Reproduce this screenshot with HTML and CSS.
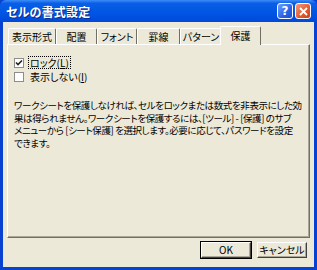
FILE: index.html
```html
<!DOCTYPE html>
<html>
	<head>
		<meta charset="utf-8">
		<title>セルの書式設定</title>
		<link rel="stylesheet" href="styles.css">
	</head>
	<body>
		<div class="window">
			<div class="titlebar">
				<span class="title">セルの書式設定</span>
				<span class="tbtn help">?</span>
				<span class="tbtn close">
					<svg width="9" height="9" viewBox="0 0 9 9"><path d="M1 1L8 8M8 1L1 8" stroke="#fff" stroke-width="1.8"/></svg>
				</span>
			</div>
			<div class="frame">
				<div class="tabs">
					<span class="tab" style="width:48px">表示形式</span>
					<span class="tab" style="width:41px">配置</span>
					<span class="tab" style="width:40px">フォント</span>
					<span class="tab" style="width:43px">罫線</span>
					<span class="tab" style="width:42px">パターン</span>
					<span class="tab active" style="width:41px">保護</span>
				</div>
				<div class="panel">
					<div class="check">
						<span class="box">
							<svg width="8" height="8" viewBox="0 0 8 8"><path d="M1 3.5L3 5.5L7 1.5" fill="none" stroke="#222" stroke-width="1.6"/></svg>
						</span>
						<span class="label focus">ロック(<u>L</u>)</span>
					</div>
					<div class="check">
						<span class="box"></span>
						<span class="label">表示しない(<u>I</u>)</span>
					</div>
					<p class="note">ワークシートを保護しなければ、セルをロックまたは数式を非表示にした効<br>果は得られません。ワークシートを保護するには、[ツール] - [保護] のサブ<br>メニューから [シート保護] を選択します。必要に応じて、パスワードを設定<br>できます。</p>
				</div>
				<div class="footer">
					<button class="btn default">OK</button>
					<button class="btn">キャンセル</button>
				</div>
			</div>
		</div>
	</body>
</html>
```

FILE: styles.css
```css
*{
	margin: 0;
	padding: 0;
	box-sizing: border-box;
}
body{
	width: 317px;
	height: 270px;
	font-family: "Noto Sans CJK JP", sans-serif;
	font-size: 10px;
	font-feature-settings: "palt";
	color: #000;
}
.window{
	width: 317px;
	height: 270px;
	background: #0842d0;
	display: flex;
	flex-direction: column;
}
.titlebar{
	height: 22px;
	display: flex;
	align-items: center;
	padding: 0 6px 0 6px;
	background: linear-gradient(#3d8cf8 0%, #0a5ee6 15%, #0055e5 60%, #0049d8 100%);
	border-radius: 6px 6px 0 0;
}
.title{
	flex: 1;
	color: #fff;
	font-weight: bold;
	font-size: 12px;
	letter-spacing: 0.2px;
	text-shadow: 1px 1px 0 #0a2a8a;
}
.tbtn{
	width: 16px;
	height: 16px;
	border: 1px solid #fff;
	border-radius: 3px;
	display: flex;
	align-items: center;
	justify-content: center;
	color: #fff;
	font-family: "DejaVu Sans", sans-serif;
	font-weight: bold;
	font-size: 12px;
	margin-left: 2px;
}
.help{
	background: linear-gradient(135deg, #6fa2ff, #2a63e8 60%, #1d4fd0);
}
.close{
	background: linear-gradient(135deg, #f39a7c, #e25a2e 60%, #c8401c);
}
.frame{
	flex: 1;
	margin: 0 3px 3px;
	background: #ece9d8;
	display: flex;
	flex-direction: column;
	padding: 4px 4px 0 4px;
}
.tabs{
	display: flex;
	align-items: flex-end;
	height: 18px;
	padding-left: 1px;
	position: relative;
	z-index: 1;
}
.tab{
	height: 16px;
	display: flex;
	align-items: center;
	justify-content: center;
	border-left: 1px solid #fff;
	border-top: 1px solid #fff;
	border-right: 1px solid #716f64;
	border-radius: 2px 2px 0 0;
	white-space: nowrap;
}
.tab.active{
	height: 19px;
	margin: 0 -2px -1px;
	background: #ece9d8;
	padding-bottom: 1px;
}
.panel{
	height: 194px;
	border-left: 1px solid #fff;
	border-top: 1px solid #fff;
	border-right: 1px solid #716f64;
	border-bottom: 1px solid #716f64;
	padding: 11px 0 0 6px;
	box-shadow: inset -1px -1px 0 #aca899;
	overflow: hidden;
}
.check{
	display: flex;
	align-items: center;
	height: 13px;
	margin-bottom: 1px;
}
.box{
	width: 10px;
	height: 10px;
	border: 1px solid #8d8d8d;
	background: #fff;
	display: flex;
	align-items: center;
	justify-content: center;
	margin-right: 4px;
}
.label{
	padding: 0 1px;
	line-height: 11px;
	border: 1px dotted transparent;
}
.label.focus{
	border-color: #000;
}
.note{
	margin-top: 16px;
	line-height: 12.5px;
	font-size: 9.5px;
	letter-spacing: -0.4px;
	white-space: nowrap;
}
.footer{
	display: flex;
	justify-content: flex-end;
	padding: 4px 3px 0 0;
}
.btn{
	width: 50px;
	height: 16px;
	margin-left: 6px;
	font-family: "Noto Sans CJK JP", sans-serif;
	font-size: 10px;
	font-feature-settings: "palt";
	background: #ece9d8;
	border: 1px solid;
	border-color: #fff #404040 #404040 #fff;
	box-shadow: inset -1px -1px 0 #aca899;
	line-height: 12px;
}
.btn.default{
	outline: 1px solid #000;
}
```
